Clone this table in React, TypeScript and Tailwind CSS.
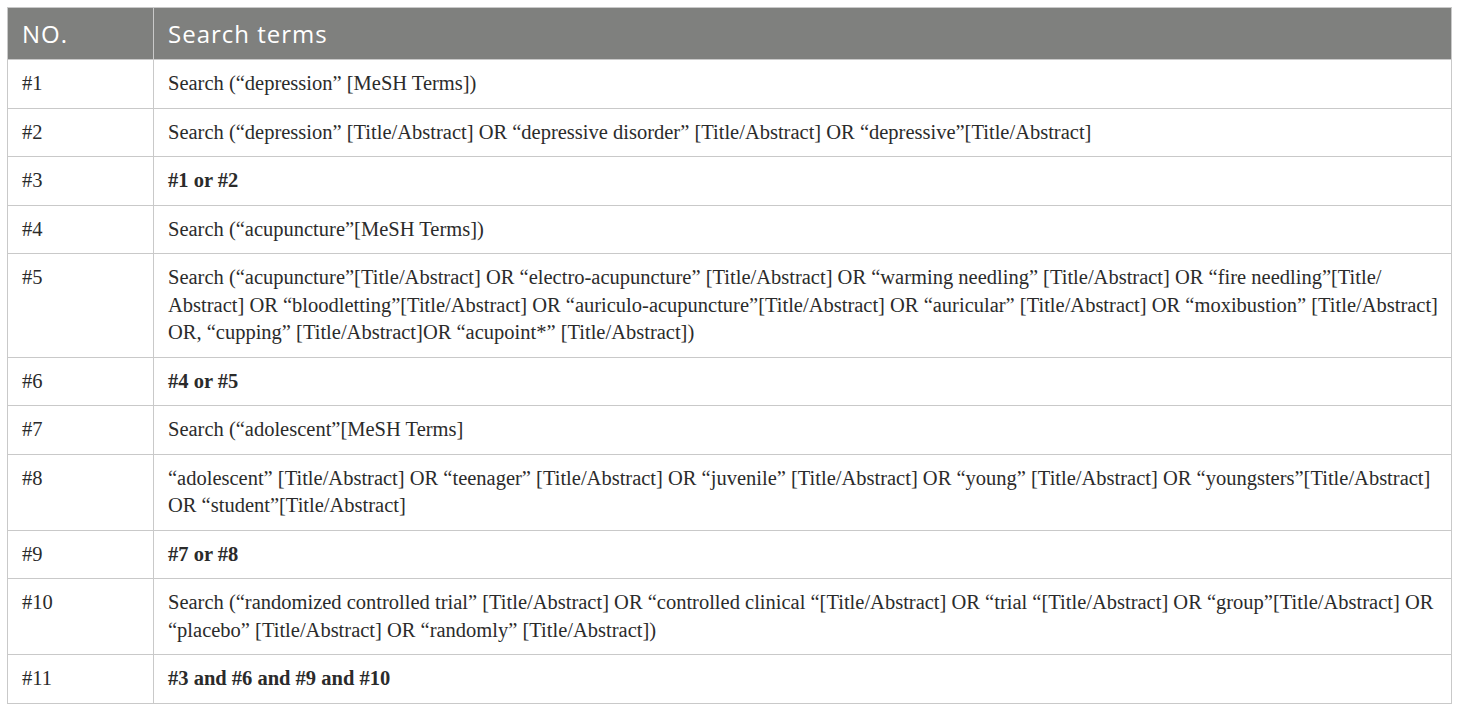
const rows: { no: string; lines: string[]; bold?: boolean }[] = [
  { no: '#1', lines: ['Search (“depression” [MeSH Terms])'] },
  { no: '#2', lines: ['Search (“depression” [Title/Abstract] OR “depressive disorder” [Title/Abstract] OR “depressive”[Title/Abstract]'] },
  { no: '#3', lines: ['#1 or #2'], bold: true },
  { no: '#4', lines: ['Search (“acupuncture”[MeSH Terms])'] },
  {
    no: '#5',
    lines: [
      'Search (“acupuncture”[Title/Abstract] OR “electro-acupuncture” [Title/Abstract] OR “warming needling” [Title/Abstract] OR “fire needling”[Title/',
      'Abstract] OR “bloodletting”[Title/Abstract] OR “auriculo-acupuncture”[Title/Abstract] OR “auricular” [Title/Abstract] OR “moxibustion” [Title/Abstract]',
      'OR, “cupping” [Title/Abstract]OR “acupoint*” [Title/Abstract])',
    ],
  },
  { no: '#6', lines: ['#4 or #5'], bold: true },
  { no: '#7', lines: ['Search (“adolescent”[MeSH Terms]'] },
  {
    no: '#8',
    lines: [
      '“adolescent” [Title/Abstract] OR “teenager” [Title/Abstract] OR “juvenile” [Title/Abstract] OR “young” [Title/Abstract] OR “youngsters”[Title/Abstract]',
      'OR “student”[Title/Abstract]',
    ],
  },
  { no: '#9', lines: ['#7 or #8'], bold: true },
  {
    no: '#10',
    lines: [
      'Search (“randomized controlled trial” [Title/Abstract] OR “controlled clinical “[Title/Abstract] OR “trial “[Title/Abstract] OR “group”[Title/Abstract] OR',
      '“placebo” [Title/Abstract] OR “randomly” [Title/Abstract])',
    ],
  },
  { no: '#11', lines: ['#3 and #6 and #9 and #10'], bold: true },
]

export default function App() {
  return (
    <div className="bg-white p-[7px] w-[1460px] h-[709px]">
      <table className="w-[1445px] border-collapse border border-[#c9c9c9] table-fixed">
        <colgroup>
          <col className="w-[146px]" />
          <col />
        </colgroup>
        <thead>
          <tr className="bg-[#7f807e] h-[52px]">
            <th className="text-left font-normal text-white text-[24px] tracking-[1px] px-[14px] border-r border-[#c9c9c9] font-['Open_Sans',sans-serif]">
              NO.
            </th>
            <th className="text-left font-normal text-white text-[24px] tracking-[1px] px-[14px] font-['Open_Sans',sans-serif]">
              Search terms
            </th>
          </tr>
        </thead>
        <tbody className="font-['Liberation_Serif',serif] text-[20.5px] leading-[27.5px] text-[#2b2b2b]">
          {rows.map((r) => (
            <tr key={r.no} className="border-t border-[#c9c9c9]">
              <td className="align-top px-[14px] py-[10px] border-r border-[#c9c9c9]">{r.no}</td>
              <td className={`align-top px-[14px] py-[10px] ${r.bold ? 'font-bold' : ''}`}>
                {r.lines.map((l, i) => (
                  <div key={i} className="whitespace-nowrap">
                    {l}
                  </div>
                ))}
              </td>
            </tr>
          ))}
        </tbody>
      </table>
    </div>
  )
}
